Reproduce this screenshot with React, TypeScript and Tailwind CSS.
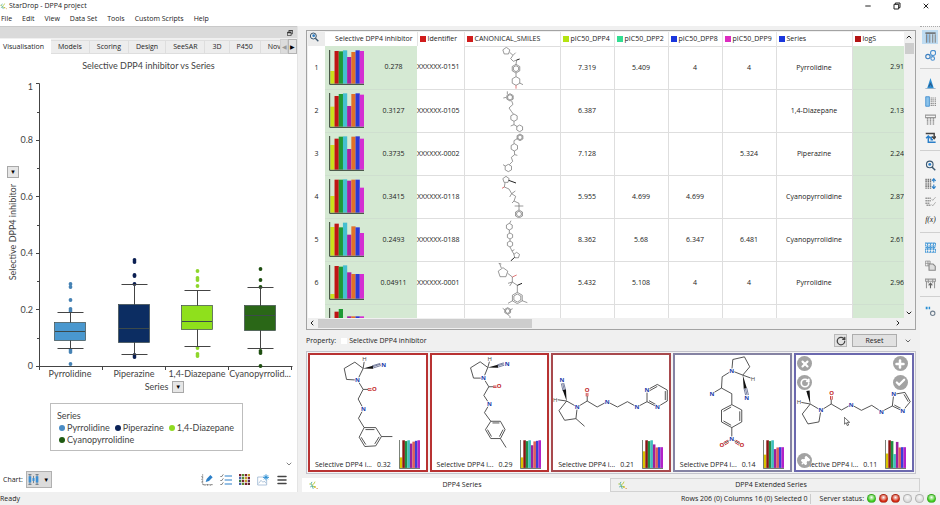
import { ReactNode } from "react";
import { ChevronDown, ChevronLeft, ChevronRight, ChevronUp, Minus, X, Plus, Check, RotateCw, Pin, Menu } from "lucide-react";

const menus = ["File", "Edit", "View", "Data Set", "Tools", "Custom Scripts", "Help"];
const tabs = ["Models", "Scoring", "Design", "SeeSAR", "3D", "P450", "Nov"];

const barColors = ["#cbe01a", "#c01414", "#1f9a35", "#45bfd0", "#a921a4", "#e2702a", "#2c38d6", "#d42fd2"];
const cardColors = ["#d9c400", "#8c1414", "#1f8f45", "#3fc0c0", "#9a219e", "#e0605a", "#3a3fd8", "#b322c8"];

const boxes = [
  { name: "Pyrrolidine", x: 70, top: 322, bottom: 340, median: 331, hi: 312, lo: 348, fill: "#4a98cf", dot: "#4682b4", dots: [284, 287, 300, 309, 311, 350, 352, 364] },
  { name: "Piperazine", x: 134, top: 304, bottom: 342, median: 328, hi: 284, lo: 354, fill: "#0c2d62", dot: "#0b1f52", dots: [260, 262, 275, 276, 284, 355, 357] },
  { name: "1,4-Diazepane", x: 197, top: 305, bottom: 329, median: 321, hi: 290, lo: 346, fill: "#8fe01c", dot: "#8ed62c", dots: [271, 278, 280, 286, 348, 354, 356] },
  { name: "Cyanopyrrolid...", x: 260, top: 305, bottom: 330, median: 315, hi: 287, lo: 348, fill: "#2a6717", dot: "#1f4f12", dots: [269, 280, 287, 351, 353, 366] },
];

const legend = [
  { name: "Pyrrolidine", color: "#4a8cc4" },
  { name: "Piperazine", color: "#0b2358" },
  { name: "1,4-Diazepane", color: "#8fdb22" },
  { name: "Cyanopyrrolidine", color: "#1f5a12" },
];

const columns = [
  { name: "Identifier", color: "#d01c1c" },
  { name: "CANONICAL_SMILES", color: "#d01c1c" },
  { name: "pIC50_DPP4", color: "#b4e312" },
  { name: "pIC50_DPP2", color: "#33dd92" },
  { name: "pIC50_DPP8", color: "#1a36dd" },
  { name: "pIC50_DPP9", color: "#dd2bc0" },
  { name: "Series", color: "#1a36dd" },
  { name: "logS", color: "#b41414" },
];

// hexagon / pentagon outline as path data
function ring(x: number, y: number, r: number, n = 6) {
  const pts = Array.from({ length: n }, (_, i) => {
    const a = (Math.PI * 2 * i) / n - Math.PI / 2;
    return `${(x + r * Math.cos(a)).toFixed(1)} ${(y + r * Math.sin(a)).toFixed(1)}`;
  });
  return `M${pts.join("L")}Z`;
}

const rows = [
  {
    score: "0.278", id: "XXXXXX-0151", values: ["7.319", "5.409", "4", "4"], series: "Pyrrolidine", logS: "2.91",
    bars: [0.38, 0.98, 0.97, 1, 0.8, 0.95, 1, 0.98], y: 137,
    mol: ring(617, 149, 11, 5) + ring(646, 202, 13) + ring(646, 202, 9) + ring(646, 239, 13) + "M627 153L637 162L630 172L638 180L648 176L646 189M637 162L645 154M646 215V226M657 245L667 250", red: "M646 252V262",
    bold: "M648 176L657 173",
  },
  {
    score: "0.3127", id: "XXXXXX-0105", values: ["6.387", "", "", ""], series: "1,4-Diazepane", logS: "2.13",
    bars: [0.6, 0.92, 0.98, 1, 0.62, 0.98, 1, 0.96], y: 266,
    mol: ring(628, 288, 11) + ring(628, 288, 8) + ring(640, 349, 11) + ring(657, 381, 10) + "M633 299L637 309L625 320L632 330L638 338M620 279V270M617 288L608 290M640 360V370L650 376M640 370L630 374", red: "", bold: "",
  },
  {
    score: "0.3735", id: "XXXXXX-0002", values: ["7.128", "", "", "5.324"], series: "Piperazine", logS: "2.24",
    bars: [0.74, 0.93, 0.99, 1, 0.62, 0.99, 1, 0.93], y: 395,
    mol: ring(658, 408, 10) + ring(658, 408, 7) + ring(641, 438, 11) + ring(623, 500, 11) + "M650 412L640 418V427M641 449L642 460L632 468L636 480L626 490M642 460L650 462M614 494L607 490", red: "", bold: "",
  },
  {
    score: "0.3415", id: "XXXXXX-0118", values: ["5.955", "4.699", "4.699", ""], series: "Cyanopyrrolidine", logS: "2.87",
    bars: [0.5, 0.99, 0.99, 1, 0.96, 0.99, 0.99, 0.75], y: 29,
    mol: ring(616, 40, 10, 5) + ring(655, 143, 12) + ring(655, 143, 8) + "M613 50L611 62L625 68L633 82L645 90L640 104L655 111V131M642 119H668M633 82L644 74M633 82L627 92M640 104L634 110", red: "M611 62L604 66", bold: "M624 42L646 50",
  },
  {
    score: "0.2493", id: "XXXXXX-0188", values: ["8.362", "5.68", "6.347", "6.481"], series: "Cyanopyrrolidine", logS: "2.61",
    bars: [0.86, 0.96, 0.85, 0.99, 0.63, 0.88, 0.85, 0.68], y: 158,
    mol: ring(626, 181, 10) + ring(628, 209, 9) + ring(628, 233, 9) + ring(648, 267, 9, 5) + "M627 171L631 163M626 191V200M628 218V224M628 242L634 254L640 264M634 254L641 250", red: "", bold: "M642 273L630 284",
  },
  {
    score: "0.04911", id: "XXXXXX-0001", values: ["5.432", "5.108", "4", "4"], series: "Pyrrolidine", logS: "2.96",
    bars: [0.14, 0.98, 0.96, 1, 0.79, 0.74, 0.74, 0.74], y: 288,
    mol: ring(607, 320, 15, 5) + ring(650, 396, 17) + ring(650, 396, 12) + "M602 306L597 293M594 292L602 294M621 322L635 333V348L622 352M635 348L650 358V379M664 404L680 410M636 404L622 412M635 348L627 360", red: "M635 333L648 327", bold: "M650 358L664 352",
  },
  {
    score: "", id: "", values: ["", "", "", ""], series: "", logS: "",
    bars: [0.2, 0.9, 0.98, 0.6, 0.76, 0.76, 0.76, 0.76], y: 417,
    mol: ring(621, 435, 10) + ring(621, 435, 7) + "M621 445L628 452V458M612 431L606 427M630 431L636 428", red: "", bold: "",
  },
];

type Atom = [string, number, number];

const cards: { score: string; border: string; box: string; bonds: string; blue: string; red: string; wedge: string; atoms: Atom[]; bars: number[] }[] = [
  {
    score: "0.32", border: "border-[#b83232]", box: "30 28 348 300",
    bonds: "M173 100L140 98L133 65L165 46L190 65L173 100M190 65L193 45M173 100L190 128L175 157L191 187L176 215L193 243L178 272L195 300L228 298L245 270L228 243L193 243M197 249H224M184 272L198 294M225 292L238 271M245 270H278M190 128L205 128",
    blue: "M218 60L243 52M219 64L244 56M217 57L241 50", red: "M204 126H216M204 131H216", wedge: "190,65 219,57 220,66",
    atoms: [["H", 194, 38], ["N", 252, 54], ["N", 173, 100], ["O", 224, 128], ["N", 191, 187]],
    bars: [0.38, 1, 0.97, 1, 0.88, 0.95, 0.98, 1],
  },
  {
    score: "0.29", border: "border-[#b83232]", box: "392 28 348 300",
    bonds: "M547 94L517 94L508 63L537 45L560 62L547 94M560 62L565 44M547 94L563 120L548 146L565 172L550 198L569 224L598 224L612 249L598 276L569 276L553 249L569 224M574 229H595M606 249L595 270M571 270L559 249M598 276L615 303M563 120H577",
    blue: "M590 57L609 51M591 61L610 55M589 54L608 48", red: "M576 118H588M576 122H588", wedge: "560,62 590,54 591,63",
    atoms: [["H", 566, 38], ["N", 618, 52], ["N", 547, 94], ["O", 594, 119], ["N", 565, 172]],
    bars: [0.38, 1, 0.97, 1, 0.82, 0.96, 0.98, 1],
  },
  {
    score: "0.21", border: "border-[#a8494d]", box: "36 28 348 300",
    bonds: "M109 181L77 163L54 192L71 221L105 216L109 181M105 216L131 239M77 163L49 159M109 181L139 163L169 181L199 165L230 181L260 165L289 181L319 165V130L350 113L380 130V163L350 181L319 165M325 133L350 119M374 133V160M325 162L348 175M139 163V148",
    blue: "M70 131L65 109M66 132L61 110M74 130L68 108", red: "M136 149V138M141 149V138", wedge: "77,163 65,130 75,128",
    atoms: [["H", 43, 159], ["N", 63, 100], ["N", 109, 181], ["O", 139, 130], ["N", 199, 165], ["N", 289, 181], ["N", 319, 130], ["N", 350, 181]],
    bars: [0.6, 1, 0.97, 1, 0.85, 0.74, 0.75, 0.75],
  },
  {
    score: "0.14", border: "border-[#8583a3]", box: "398 28 348 300",
    bonds: "M569 72L572 38L607 30L623 60L602 85L569 72L540 90L538 124L509 141M538 124L569 141V174L599 190V226L569 243L538 226V190L569 174M593 194V223M567 236L544 223M544 194L567 181M602 85L632 96M569 243V278L539 295M569 278L599 295",
    blue: "M610 125L615 146M606 126L611 147M614 124L619 145", red: "M560 288L547 296M557 281L544 288M578 288L591 296M581 281L594 288", wedge: "602,85 605,126 614,124",
    atoms: [["H", 633, 96], ["N", 614, 154], ["N", 569, 72], ["N", 509, 141], ["N", 569, 278], ["O", 539, 295], ["O", 599, 295]],
    bars: [0.48, 1, 0.97, 1, 0.68, 0.74, 0.75, 0.75],
  },
  {
    score: "0.11", border: "border-[#6b68ae]", box: "39 28 348 300",
    bonds: "M114 191L82 172L58 202L75 232L108 226L114 191L145 172L176 190L205 174L236 191L267 176L296 195L329 178L333 143L367 137L383 165L360 193L329 178M335 175L356 186M364 143L377 165M82 172L54 167M145 172V158",
    blue: "", red: "M143 159V148M148 159V148", wedge: "82,172 70,133 80,131",
    atoms: [["H", 48, 166], ["N", 114, 191], ["O", 146, 139], ["N", 205, 174], ["N", 296, 195], ["N", 333, 143], ["N", 360, 193]],
    bars: [0.52, 1, 0.97, 0.5, 0.94, 0.74, 0.75, 0.75],
  },
];

const atomColor: Record<string, string> = { N: "#2038a8", O: "#c01c1c", H: "#444" };

function Bars({ values, colors, className }: { values: number[]; colors: string[]; className: string }) {
  return (
    <svg viewBox="0 0 105 105" preserveAspectRatio="none" className={className}>
      {values.map((v, i) => (
        <rect key={i} x={4 + i * 12.6} y={101 - v * 100} width="12.8" height={v * 100} fill={colors[i]} />
      ))}
      <path d="M2 0V103H105" fill="none" stroke="#2f3b2f" strokeWidth="3" />
    </svg>
  );
}

function LogoIcon({ className }: { className: string }) {
  return (
    <svg viewBox="0 0 30 30" className={className} fill="none" strokeWidth="3">
      <path d="M10 3L6 10L11 16L4 20M11 16L14 26" stroke="#4aa8a0" />
      <path d="M20 2L17 9L11 12M6 10H1" stroke="#b8c83a" />
      <circle cx="20" cy="20" r="3" fill="#e2b91e" />
      <circle cx="27" cy="25" r="2" fill="#d8781e" />
      <path d="M11 16L20 20" stroke="#8bbf4a" />
    </svg>
  );
}

function ChartPanel() {
  return (
    <section className="flex w-[298px] shrink-0 flex-col border-r border-[#e4e4e4]">
      <div className="flex h-3 items-center justify-end border-t border-[#c9c9c9] bg-[#dadada] pr-1">
        <button aria-label="Float panel">
          <svg viewBox="0 0 16 16" className="size-[6px]" fill="none" stroke="#333" strokeWidth="2">
            <path d="M5 5V1H15V10H11M1 6H11V15H1Z" />
            <path d="M1 7H11M5 2H15" strokeWidth="3" />
          </svg>
        </button>
      </div>
      <div className="flex h-4 items-stretch bg-[#f0f0f0] pt-px">
        <button className="bg-white pr-[7px] pl-[3px]">Visualisation</button>
        <div className="flex min-w-0 flex-1 overflow-hidden pt-px">
          {tabs.map((t) => (
            <button key={t} className="shrink-0 border-y border-r border-[#dedede] bg-[#ededed] px-[7px]">{t}</button>
          ))}
        </div>
        <button aria-label="Previous tab" className="flex w-2 items-center justify-center border border-[#d0d0d0] bg-[#dcdcdc] text-[6px] text-[#999]">◀</button>
        <button aria-label="Next tab" className="flex w-[9px] items-center justify-center border border-[#b4b4b4] bg-[#e3e3e3] text-[6px] text-black">▶</button>
      </div>

      <div className="flex flex-1 flex-col bg-white font-[Lato,sans-serif] text-[9px] text-[#444]">
        <h2 className="pt-[6px] text-center leading-3">Selective DPP4 inhibitor vs Series</h2>
        <div className="flex pt-[2px]">
          <div className="flex w-5 shrink-0 flex-col items-center pt-[92px] pl-[6px]">
            <button aria-label="Y axis property" className="flex size-3 items-center justify-center border border-[#a8a8a8] bg-[#e6e6e6] text-[6px] text-black">▼</button>
            <span className="mt-[6px] rotate-180 whitespace-nowrap [writing-mode:vertical-rl]">Selective DPP4 inhibitor</span>
          </div>
          <svg viewBox="20 74 277 307" className="min-w-0 flex-1" fontSize="9" fill="#444">
            <path d="M36 83.500H39.500V366.500H292.500" fill="none" stroke="#444" />
            {[0, 1, 2, 3, 4, 5].map((i) => (
              <g key={i}>
                <path d={`M36 ${Math.round(366 - i * 56.6) + 0.5}H39`} stroke="#444" />
                <text x="33" y={369 - i * 56.5 + (i === 5 ? 3 : 0)} textAnchor="end">{i === 5 ? "1" : i === 0 ? "0" : (i / 5).toFixed(1)}</text>
                {i < 5 && <path d={`M37 ${Math.round(338 - i * 56.6) + 0.5}H39`} stroke="#444" />}
              </g>
            ))}
            <path d="M39.500 366V370M102.500 366V370M165.500 366V370M228.500 366V370M291.500 366V370" stroke="#444" />
            {boxes.map((b) => (
              <g key={b.name}>
                {b.dots.map((d, i) => <circle key={i} cx={b.x + 0.5} cy={d} r="1.900" fill={b.dot} />)}
                <path d={`M${b.x - 12.5} ${b.hi + 0.5}H${b.x + 13.5}M${b.x - 12.5} ${b.lo + 0.5}H${b.x + 13.5}M${b.x + 0.5} ${b.hi}V${b.lo}`} stroke="#444" />
                <rect x={b.x - 15.5} y={b.top + 0.5} width="31" height={b.bottom - b.top} fill={b.fill} stroke="#3c4a4a" strokeWidth="0.7" />
                <path d={`M${b.x - 15} ${b.median + 0.5}H${b.x + 15}`} stroke="#3c4a4a" />
                <text x={b.x} y="377" textAnchor="middle">{b.name}</text>
              </g>
            ))}
          </svg>
        </div>
        <div className="flex items-center justify-center gap-1 pl-8">
          <span>Series</span>
          <button aria-label="X axis property" className="flex size-3 items-center justify-center border border-[#a8a8a8] bg-[#e6e6e6] text-[6px] text-black">▼</button>
        </div>
        <div className="mx-[50px] mt-[10px] mr-[54px] border border-[#bdbdbd] px-[6px] pt-[6px] pb-1 leading-3">
          <div>Series</div>
          <ul className="flex flex-wrap gap-x-[5px] pl-[2px]">
            {legend.map((l) => (
              <li key={l.name} className="flex items-center gap-[2px] whitespace-nowrap">
                <span className="size-[6px] rounded-full" style={{ background: l.color }} />
                {l.name}
              </li>
            ))}
          </ul>
        </div>
        <div className="mt-auto flex justify-end pr-1"><ChevronDown className="size-2" /></div>
        <div className="flex items-center gap-2 px-[3px] pt-[3px] pb-1 font-['Open_Sans',sans-serif] text-[7px] text-[#222]">
          <span className="-mr-[5px]">Chart:</span>
          <button aria-label="Chart type" className="flex h-[17px] w-[26px] items-center justify-center gap-1 border border-[#b0b0b0] bg-[#dcdcdc]">
            <svg viewBox="0 0 34 34" className="size-[11px]" fill="#3b8fd4" stroke="#456" strokeWidth="2">
              <path d="M6 1V33M1 2H11M1 32H11M17 6V28M28 1V33M23 2H33M23 32H33" />
              <path d="M2 7H10V26H2ZM14 12H20V22H14ZM24 7H32V26H24Z" stroke="none" />
            </svg>
            <span className="text-[6px] text-black">▼</span>
          </button>
          <div className="ml-auto flex items-center gap-[7px] pr-[6px]">
            <button aria-label="Edit chart">
              <svg viewBox="0 0 36 36" className="size-3" fill="none" stroke="#444" strokeWidth="2">
                <path d="M5 1V32H36M1 8H5M1 16H5M1 24H5M12 32V36M20 32V36M28 32V36" strokeDasharray="3 1" />
                <path d="M14 24L17 15L28 3L35 10L24 21Z" fill="#2b7fc8" stroke="none" />
              </svg>
            </button>
            <button aria-label="Options list">
              <svg viewBox="0 0 36 36" className="size-3" fill="none" strokeWidth="3">
                <path d="M14 6H36M14 18H36M14 30H36" stroke="#2b7fc8" />
                <path d="M1 6L4 9L10 1M1 18L4 21L10 13M1 30L4 33L10 25" stroke="#444" strokeWidth="2" />
              </svg>
            </button>
            <button aria-label="Colour grid">
              <svg viewBox="0 0 34 34" className="size-[11px]">
                {["#7a2030", "#5a8c32", "#7a2030", "#c8a12a", "#4a62a8", "#5a8c32", "#c8a12a", "#7a2030", "#3a7c3a", "#7a2030", "#c8a12a", "#5a2a5a", "#4a62a8", "#5a8c32", "#7a2030", "#5a2a2a"].map((c, i) => (
                  <rect key={i} x={(i % 4) * 9} y={Math.floor(i / 4) * 9} width="7" height="7" fill={c} />
                ))}
              </svg>
            </button>
            <button aria-label="Save image">
              <svg viewBox="0 0 36 36" className="size-3" fill="none" stroke="#88a8c8" strokeWidth="2">
                <path d="M20 9H2V33H29V18M5 28L12 19L18 25L22 21L27 28" />
                <path d="M27 1V19M18 10H36M21 4L33 16M33 4L21 16" stroke="#2b8fd4" strokeWidth="3" />
              </svg>
            </button>
            <button aria-label="Menu"><Menu className="size-3 text-[#444]" strokeWidth={3} /></button>
          </div>
        </div>
      </div>
    </section>
  );
}

function DataTable() {
  return (
    <div className="border border-[#a3a3a3] bg-[#f0f0f0] p-px">
      <div className="flex">
        <div className="h-[286px] min-w-0 flex-1 overflow-hidden bg-white">
          <table className="w-full table-fixed border-collapse text-center">
            <colgroup>
              <col className="w-[17px]" />
              <col className="w-[92px]" />
              <col className="w-[47px]" />
              <col className="w-[96px]" />
              <col className="w-[54px]" />
              <col className="w-[54px]" />
              <col className="w-[54px]" />
              <col className="w-[54px]" />
              <col className="w-[76px]" />
              <col />
            </colgroup>
            <thead>
              <tr className="h-[14px]">
                <th className="bg-[#ececec] p-0 align-top">
                  <button aria-label="Find" className="block pl-px"><SearchIcon /></button>
                </th>
                <th className="p-0 pr-1 text-right font-normal whitespace-nowrap">Selective DPP4 inhibitor</th>
                {columns.map((c) => (
                  <th key={c.name} className="border-l border-[#e4e4e4] p-0 font-normal">
                    <div className="flex items-center gap-[2px] pl-[2px] whitespace-nowrap">
                      <span className="size-[6px] shrink-0" style={{ background: c.color }} />
                      {c.name}
                    </div>
                  </th>
                ))}
              </tr>
            </thead>
            <tbody>
              {rows.map((r, i) => (
                <tr key={i} className="h-[43px]">
                  <td className="p-0">{i < 6 ? i + 1 : ""}</td>
                  <td className="border-b border-[#cfdfcf] bg-[#d5e9d3] p-0">
                    <div className="flex items-center pl-1">
                      <Bars values={r.bars} colors={barColors} className="size-[35px] shrink-0" />
                      <span className="flex-1 pl-[6px]">{r.score}</span>
                    </div>
                  </td>
                  <td className="border-b border-[#dedede] p-0 text-left whitespace-nowrap">{r.id}</td>
                  <td className="border border-[#dedede] p-0">
                    <svg viewBox={`493 ${r.y} 285 126`} className="block h-[42px] w-full" fill="none" stroke="#666" strokeWidth="2">
                      <path d={r.mol} />
                      <path d={r.red} stroke="#d03030" />
                      <path d={r.bold} stroke="#222" strokeWidth="3" />
                    </svg>
                  </td>
                  {r.values.map((v, j) => <td key={j} className="border border-[#dedede] p-0">{v}</td>)}
                  <td className="border border-[#dedede] p-0">{r.series}</td>
                  <td className="border-b border-[#cfdfcf] bg-[#d5e9d3] p-0 text-right">{r.logS}</td>
                </tr>
              ))}
            </tbody>
          </table>
        </div>
        <div className="flex w-[10px] flex-col items-center justify-between py-px">
          <div className="flex w-full flex-col items-center">
            <ChevronUp className="size-2" strokeWidth={3} />
            <div className="mt-[2px] h-[11px] w-[9px] bg-[#cdcdcd]" />
          </div>
          <ChevronDown className="size-2" strokeWidth={3} />
        </div>
      </div>
      <div className="flex h-[10px] items-center justify-between pr-3">
        <ChevronLeft className="size-2 shrink-0" strokeWidth={3} />
        <div className="ml-[2px] h-[9px] w-[36%] bg-[#cdcdcd]" />
        <ChevronRight className="ml-auto size-2 shrink-0" strokeWidth={3} />
      </div>
    </div>
  );
}

function SearchIcon() {
  return (
    <svg viewBox="0 0 30 30" className="size-[10px]" fill="none" stroke="#3c5870" strokeWidth="3">
      <circle cx="13" cy="12" r="9" />
      <path d="M19 19L28 28" strokeWidth="4" />
      <circle cx="14" cy="11" r="4" fill="#2b7fc8" stroke="none" />
    </svg>
  );
}

function RoundButton({ label, className, children }: { label: string; className: string; children: ReactNode }) {
  return (
    <button aria-label={label} className={`absolute flex size-[15px] items-center justify-center rounded-full bg-[#a3a3a3] text-white ${className}`}>
      {children}
    </button>
  );
}

function MoleculeCards() {
  return (
    <div className="grid grid-cols-5 gap-[2px] border border-[#c4c4cc] bg-[#f4f4f4] p-px">
      {cards.map((c, i) => (
        <div key={c.score} className={`relative border-2 bg-white ${c.border}`}>
          <svg viewBox={c.box} className="block h-[102px] w-full" fill="none" stroke="#333" strokeWidth="2.500">
            <path d={c.bonds} />
            <path d={c.blue} stroke="#33406e" strokeWidth="2" />
            <path d={c.red} stroke="#c01c1c" />
            <polygon points={c.wedge} fill="#111" stroke="none" />
            {c.atoms.map(([s, x, y]) => (
              <text key={`${x}-${y}`} x={x} y={y + 6} textAnchor="middle" fontSize="18" fontWeight={s === "H" ? 400 : 700} fill={atomColor[s]} stroke="white" strokeWidth="4" paintOrder="stroke">{s}</text>
            ))}
          </svg>
          <div className="flex h-[13px] items-end pr-[6px] pb-px pl-[5px] leading-[9px] whitespace-nowrap">
            <span>Selective DPP4 i...</span>
            <span className="ml-[5px]">{c.score}</span>
            <Bars values={c.bars} colors={cardColors} className="ml-auto h-[29px] w-[21px] shrink-0" />
          </div>
          {i === 4 && (
            <>
              <RoundButton label="Remove" className="top-px left-px"><X className="size-[10px]" strokeWidth={5} /></RoundButton>
              <RoundButton label="Add" className="top-px right-1"><Plus className="size-3" strokeWidth={5} /></RoundButton>
              <RoundButton label="Rotate" className="top-5 left-px"><RotateCw className="size-[10px]" strokeWidth={4} /></RoundButton>
              <RoundButton label="Accept" className="top-5 right-1"><Check className="size-[11px]" strokeWidth={5} /></RoundButton>
              <RoundButton label="Pin" className="bottom-[2px] left-px"><Pin className="size-[10px] rotate-45" fill="white" strokeWidth={3} /></RoundButton>
              <svg viewBox="0 0 18 27" className="absolute top-[62px] left-12 h-[9px] w-[6px]" fill="white" stroke="#222" strokeWidth="2">
                <path d="M1 1V22L6 17L10 26L14 24L10 16H17Z" />
              </svg>
            </>
          )}
        </div>
      ))}
    </div>
  );
}

// right hand tool strip, null is a separator
const tools: ({ label: string; icon: ReactNode } | null)[] = [
  { label: "Table view", icon: <><path d="M1 3H29" stroke="#666" strokeWidth="4" /><path d="M4 6V29M13 6V29M21 6V29M28 6V29" stroke="#888" strokeWidth="3" /><path d="M8 6V29" stroke="#4a90d0" strokeWidth="2" /></> },
  { label: "Card view", icon: <><circle cx="8" cy="18" r="6" stroke="#3c7fc0" strokeWidth="3" /><circle cx="22" cy="8" r="7" stroke="#4a90d0" strokeWidth="3" /><circle cx="21" cy="23" r="5" stroke="#4a90d0" strokeWidth="3" /></> },
  null,
  { label: "Distribution", icon: <><path d="M15 0L24 28H6Z" fill="#2b8fd4" /><path d="M1 29H29" stroke="#7a9ab8" strokeWidth="2" /><path d="M10 24L15 15L20 24" stroke="#2a5a8a" strokeWidth="3" /></> },
  { label: "Columns", icon: <><path d="M2 2H12V28H2Z" fill="#8cc4ec" stroke="#2b7fc8" strokeWidth="2" /><path d="M17 4V29M22 4V29M28 4V29" stroke="#777" strokeWidth="3" strokeDasharray="3 2" /></> },
  { label: "Freeze columns", icon: <><path d="M1 3H29V10H1Z" stroke="#999" strokeWidth="3" /><path d="M7 10V29M15 10V29M23 10V29" stroke="#999" strokeWidth="4" strokeDasharray="4 1" /></> },
  { label: "Transpose", icon: <><path d="M2 4H25V16M19 12L25 18L30 12" stroke="#444" strokeWidth="4" /><path d="M9 11V28H29M3 17L9 11L15 17M17 12V21H22" stroke="#2b7fc8" strokeWidth="4" /></> },
  null,
  { label: "Search", icon: <><circle cx="13" cy="12" r="9" stroke="#3c5870" strokeWidth="3" /><path d="M19 19L28 28" stroke="#3c5870" strokeWidth="4" /><circle cx="13" cy="12" r="4" fill="#2b7fc8" /></> },
  { label: "Sort", icon: <><path d="M3 2V29M9 2V29M15 2V29" stroke="#777" strokeWidth="4" strokeDasharray="4 1" /><path d="M24 3V12M24 18V28M19 8L24 2L29 8M19 23L24 29L29 23" stroke="#2b7fc8" strokeWidth="3" /></> },
  { label: "Validate", icon: <><path d="M1 6H16M1 13H16M1 20H12M4 25H16" stroke="#999" strokeWidth="4" strokeDasharray="5 1" /><path d="M18 8L21 12L29 3M18 23L21 27L29 17" stroke="#999" strokeWidth="2" /></> },
  { label: "Function", icon: <text x="15" y="21" textAnchor="middle" fontSize="21" fontStyle="italic" fontFamily="Liberation Serif, serif" fill="#222">f(x)</text> },
  null,
  { label: "Clusters", icon: <path d="M1 3H29V11H1ZM1 15H29M1 19H29V28H1ZM7 2V29M15 2V29M23 2V29" stroke="#4a9bd8" strokeWidth="3" strokeDasharray="6 1" /> },
  { label: "Copy", icon: <><path d="M1 3H14V16H1ZM1 9H14M8 3V16" stroke="#888" strokeWidth="2" /><path d="M11 11H22L28 17V28H11Z" fill="#ddd" stroke="#888" strokeWidth="3" /></> },
  { label: "Export", icon: <><path d="M1 3H29V9H1ZM4 9V28M26 9V28M9 3V14M21 3V14" stroke="#999" strokeWidth="3" /><path d="M15 28V15M10 20L15 14L20 20" stroke="#666" strokeWidth="3" /></> },
  null,
  { label: "Settings", icon: <><path d="M2 2H7V9H2ZM10 2H14V9H10Z" fill="#2b8fd4" /><circle cx="21" cy="20" r="6" stroke="#708090" strokeWidth="3" /></> },
];

function ToolStrip() {
  return (
    <aside className="flex w-5 shrink-0 flex-col items-center border-t border-dotted border-[#aaa] bg-[#f3f3f3] pt-[3px]">
      {tools.map((t, i) =>
        t === null ? (
          <hr key={i} className="mt-[6px] mb-[7px] w-full border-[#d0d0d0]" />
        ) : (
          <button key={t.label} aria-label={t.label} className={`flex h-[14px] w-4 items-center justify-center ${i === 0 ? "bg-[#bfdcf2]" : ""} ${tools[i + 1] ? "mb-[4px]" : ""}`}>
            <svg viewBox="0 0 30 30" className="size-[11px]" fill="none">{t.icon}</svg>
          </button>
        )
      )}
    </aside>
  );
}

export default function App() {
  return (
    <div className="flex min-h-screen w-full flex-col bg-[#f0f0f0] font-['Open_Sans','Noto_Sans',sans-serif] text-[7px] leading-[10px] text-[#222]">
      <header className="bg-white">
        <div className="flex h-3 items-center gap-[2px]">
          <LogoIcon className="size-[7px]" />
          <h1>StarDrop - DPP4 project</h1>
          <div className="ml-auto flex items-center gap-[21px] pr-[10px]">
            <button aria-label="Minimize"><Minus className="size-2" strokeWidth={3} /></button>
            <button aria-label="Restore">
              <svg viewBox="0 0 24 24" className="size-2" fill="none" stroke="#222" strokeWidth="3"><path d="M7 7V3H21V17H17M3 7H17V21H3Z" /></svg>
            </button>
            <button aria-label="Close"><X className="size-2" strokeWidth={3} /></button>
          </div>
        </div>
        <nav className="flex h-[14px] items-center gap-[10px] pl-px">
          {menus.map((m) => <button key={m}>{m}</button>)}
        </nav>
      </header>

      <div className="flex flex-1">
        <ChartPanel />
        <main className="flex min-w-0 flex-1 flex-col pl-1">
          <div className="px-1 pt-1">
            <DataTable />
            <div className="flex h-[21px] items-center">
              <span>Property:</span>
              <span className="mr-[2px] ml-[5px] size-[6px] bg-white" />
              <span>Selective DPP4 inhibitor</span>
              <button aria-label="Refresh" className="ml-auto flex size-[13px] items-center justify-center border border-[#b8b8b8] bg-[#e3e3e3]"><RotateCw className="size-[10px] text-[#444]" strokeWidth={3} /></button>
              <button className="ml-[5px] flex h-[13px] w-[45px] items-center justify-center border border-[#adadad] bg-[#e1e1e1]">Reset</button>
              <button aria-label="Collapse" className="ml-[7px] pr-1"><ChevronDown className="size-2" /></button>
            </div>
            <MoleculeCards />
          </div>
          <div className="mt-auto flex">
            <button className="relative flex h-[14px] flex-1 items-center justify-center bg-white pl-3">
              <LogoIcon className="absolute left-[7px] size-[9px]" />
              DPP4 Series
            </button>
            <button className="relative flex h-[14px] flex-1 items-center justify-center border border-[#d2d2d2] bg-[#f0f0f0] pl-3">
              <LogoIcon className="absolute left-[7px] size-[9px]" />
              DPP4 Extended Series
            </button>
          </div>
        </main>
        <ToolStrip />
      </div>

      <footer className="flex h-[13px] items-center">
        <span>Ready</span>
        <span className="ml-auto border-r border-[#ccc] pr-[2px]">Rows 206 (0) Columns 16 (0) Selected 0</span>
        <span className="ml-[9px]">Server status:</span>
        <div className="flex gap-[3px] pr-1 pl-[3px]">
          {["#3fcf1e", "#d62a12", "#d62a12", "#dcdcdc", "#dcdcdc", "#3fcf1e"].map((c, i) => (
            <span key={i} className="size-[9px] rounded-full border border-black/20" style={{ background: `radial-gradient(circle at 50% 35%, #ffffff99, ${c} 65%)` }} />
          ))}
        </div>
      </footer>
    </div>
  );
}
